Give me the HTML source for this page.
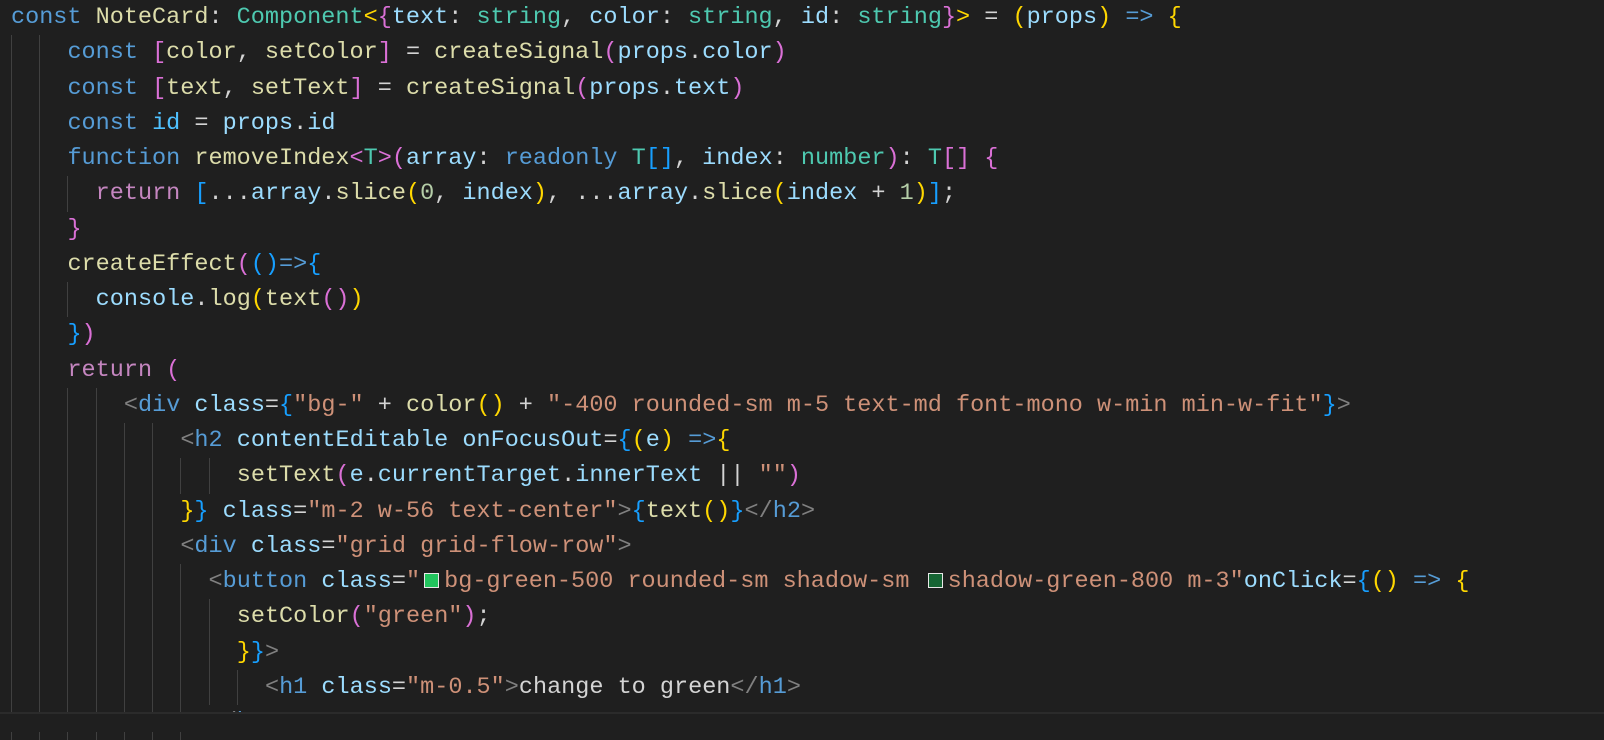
<!DOCTYPE html>
<html><head><meta charset="utf-8"><style>
html,body{margin:0;padding:0;background:#1f1f1f;width:1604px;height:730px;overflow:hidden}
#c{position:absolute;left:11px;top:0;font-family:"Liberation Mono",monospace;font-size:23.5px;color:#d4d4d4;white-space:pre}
.l{display:block;height:35.25px;line-height:35.25px}
.g{display:inline-block;height:35.25px;vertical-align:top;box-shadow:inset 1px 0 #404040}
.k{color:#569cd6}.v{color:#9cdcfe}.f{color:#dcdcaa}.t{color:#4ec9b0}.s{color:#ce9178}.p{color:#808080}.r{color:#c586c0}.n{color:#b5cea8}.c{color:#4fc1ff}
.y{color:#ffd700}.m{color:#da70d6}.b{color:#179fff}
.sw{display:inline-block;width:13px;height:13px;border:1.5px solid #e8e8e8;margin:0 5px 0 4px;vertical-align:-1px}
#bot{position:absolute;left:0;top:712px;width:1604px;height:18px;background:#1f1f1f;border-top:2px solid #2b2b2b}
</style></head><body>
<div id="c"><span class="l"><span class="k">const</span> <span class="f">NoteCard</span>: <span class="t">Component</span><span class="y">&lt;</span><span class="m">{</span><span class="v">text</span>: <span class="t">string</span>, <span class="v">color</span>: <span class="t">string</span>, <span class="v">id</span>: <span class="t">string</span><span class="m">}</span><span class="y">&gt;</span> = <span class="y">(</span><span class="v">props</span><span class="y">)</span> <span class="k">=&gt;</span> <span class="y">{</span></span><span class="l"><span class="g">  </span><span class="g">  </span><span class="k">const</span> <span class="m">[</span><span class="f">color</span>, <span class="f">setColor</span><span class="m">]</span> = <span class="f">createSignal</span><span class="m">(</span><span class="v">props</span>.<span class="v">color</span><span class="m">)</span></span><span class="l"><span class="g">  </span><span class="g">  </span><span class="k">const</span> <span class="m">[</span><span class="f">text</span>, <span class="f">setText</span><span class="m">]</span> = <span class="f">createSignal</span><span class="m">(</span><span class="v">props</span>.<span class="v">text</span><span class="m">)</span></span><span class="l"><span class="g">  </span><span class="g">  </span><span class="k">const</span> <span class="c">id</span> = <span class="v">props</span>.<span class="v">id</span></span><span class="l"><span class="g">  </span><span class="g">  </span><span class="k">function</span> <span class="f">removeIndex</span><span class="m">&lt;</span><span class="t">T</span><span class="m">&gt;(</span><span class="v">array</span>: <span class="k">readonly</span> <span class="t">T</span><span class="b">[]</span>, <span class="v">index</span>: <span class="t">number</span><span class="m">)</span>: <span class="t">T</span><span class="m">[]</span> <span class="m">{</span></span><span class="l"><span class="g">  </span><span class="g">  </span><span class="g">  </span><span class="r">return</span> <span class="b">[</span>...<span class="v">array</span>.<span class="f">slice</span><span class="y">(</span><span class="n">0</span>, <span class="v">index</span><span class="y">)</span>, ...<span class="v">array</span>.<span class="f">slice</span><span class="y">(</span><span class="v">index</span> + <span class="n">1</span><span class="y">)</span><span class="b">]</span>;</span><span class="l"><span class="g">  </span><span class="g">  </span><span class="m">}</span></span><span class="l"><span class="g">  </span><span class="g">  </span><span class="f">createEffect</span><span class="m">(</span><span class="b">()</span><span class="k">=&gt;</span><span class="b">{</span></span><span class="l"><span class="g">  </span><span class="g">  </span><span class="g">  </span><span class="v">console</span>.<span class="f">log</span><span class="y">(</span><span class="f">text</span><span class="m">()</span><span class="y">)</span></span><span class="l"><span class="g">  </span><span class="g">  </span><span class="b">}</span><span class="m">)</span></span><span class="l"><span class="g">  </span><span class="g">  </span><span class="r">return</span> <span class="m">(</span></span><span class="l"><span class="g">  </span><span class="g">  </span><span class="g">  </span><span class="g">  </span><span class="p">&lt;</span><span class="k">div</span> <span class="v">class</span>=<span class="b">{</span><span class="s">"bg-"</span> + <span class="f">color</span><span class="y">()</span> + <span class="s">"-400 rounded-sm m-5 text-md font-mono w-min min-w-fit"</span><span class="b">}</span><span class="p">&gt;</span></span><span class="l"><span class="g">  </span><span class="g">  </span><span class="g">  </span><span class="g">  </span><span class="g">  </span><span class="g">  </span><span class="p">&lt;</span><span class="k">h2</span> <span class="v">contentEditable</span> <span class="v">onFocusOut</span>=<span class="b">{</span><span class="y">(</span><span class="v">e</span><span class="y">)</span> <span class="k">=&gt;</span><span class="y">{</span></span><span class="l"><span class="g">  </span><span class="g">  </span><span class="g">  </span><span class="g">  </span><span class="g">  </span><span class="g">  </span><span class="g">  </span><span class="g">  </span><span class="f">setText</span><span class="m">(</span><span class="v">e</span>.<span class="v">currentTarget</span>.<span class="v">innerText</span> || <span class="s">""</span><span class="m">)</span></span><span class="l"><span class="g">  </span><span class="g">  </span><span class="g">  </span><span class="g">  </span><span class="g">  </span><span class="g">  </span><span class="y">}</span><span class="b">}</span> <span class="v">class</span>=<span class="s">"m-2 w-56 text-center"</span><span class="p">&gt;</span><span class="b">{</span><span class="f">text</span><span class="y">()</span><span class="b">}</span><span class="p">&lt;/</span><span class="k">h2</span><span class="p">&gt;</span></span><span class="l"><span class="g">  </span><span class="g">  </span><span class="g">  </span><span class="g">  </span><span class="g">  </span><span class="g">  </span><span class="p">&lt;</span><span class="k">div</span> <span class="v">class</span>=<span class="s">"grid grid-flow-row"</span><span class="p">&gt;</span></span><span class="l"><span class="g">  </span><span class="g">  </span><span class="g">  </span><span class="g">  </span><span class="g">  </span><span class="g">  </span><span class="g">  </span><span class="p">&lt;</span><span class="k">button</span> <span class="v">class</span>=<span class="s">"<span class="sw" style="background:#22c55e"></span>bg-green-500 rounded-sm shadow-sm <span class="sw" style="background:#166534"></span>shadow-green-800 m-3"</span><span class="v">onClick</span>=<span class="b">{</span><span class="y">()</span> <span class="k">=&gt;</span> <span class="y">{</span></span><span class="l"><span class="g">  </span><span class="g">  </span><span class="g">  </span><span class="g">  </span><span class="g">  </span><span class="g">  </span><span class="g">  </span><span class="g">  </span><span class="f">setColor</span><span class="m">(</span><span class="s">"green"</span><span class="m">)</span>;</span><span class="l"><span class="g">  </span><span class="g">  </span><span class="g">  </span><span class="g">  </span><span class="g">  </span><span class="g">  </span><span class="g">  </span><span class="g">  </span><span class="y">}</span><span class="b">}</span><span class="p">&gt;</span></span><span class="l"><span class="g">  </span><span class="g">  </span><span class="g">  </span><span class="g">  </span><span class="g">  </span><span class="g">  </span><span class="g">  </span><span class="g">  </span><span class="g">  </span><span class="p">&lt;</span><span class="k">h1</span> <span class="v">class</span>=<span class="s">"m-0.5"</span><span class="p">&gt;</span>change to green<span class="p">&lt;/</span><span class="k">h1</span><span class="p">&gt;</span></span><span class="l"><span class="g">  </span><span class="g">  </span><span class="g">  </span><span class="g">  </span><span class="g">  </span><span class="g">  </span><span class="g">  </span><span class="p">&lt;/</span><span class="k">button</span><span class="p">&gt;</span></span></div>
<div id="bot"></div>
</body></html>
